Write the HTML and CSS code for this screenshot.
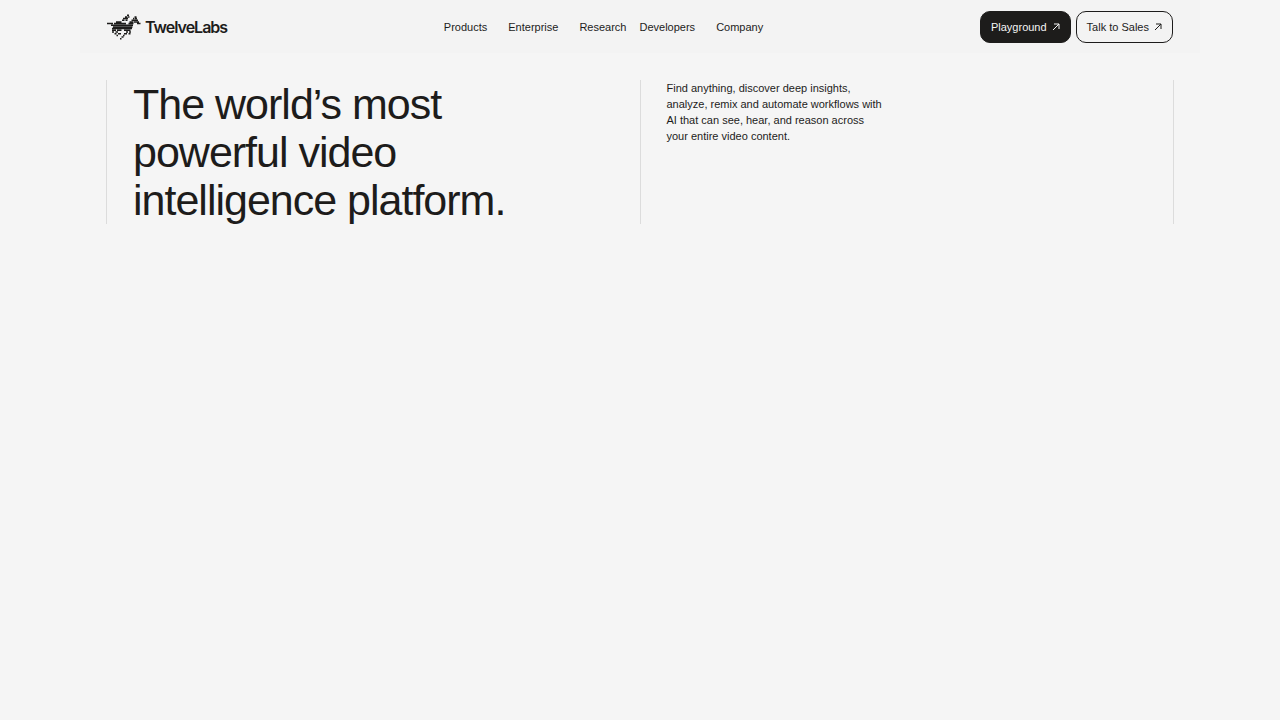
FILE: index.html
```
<!DOCTYPE html>
<html lang="en">
<head>
<meta charset="utf-8">
<meta name="viewport" content="width=device-width, initial-scale=1">
<title>TwelveLabs</title>
<link rel="stylesheet" href="styles.css">
</head>
<body>
<header class="header">
  <a class="logo" href="#" aria-label="TwelveLabs home">
    <svg class="logo-mark" viewBox="0 0 34 26" aria-hidden="true">
      <path stroke="currentColor" stroke-width="1.5" fill="none" d="M20 1.2h2M18 2.9h2.500M21 2.9h1.500M27.500 2.9h2M16 4.600h5M26 4.600h1.500M28 4.600h2M15 6.300h2.500M18.500 6.300h2M24.500 6.300h6.500M9 8h5.500M22.500 8h3.500M26.500 8h5.500M0 9.500h6M7 9.500h12M21.500 9.500h5M30 9.500h3.500M4 11.200h22M6 12.900h19.500M5 14.600h20M5 16.300h4M10 16.300h4.500M17 16.300h6.500M5 18h2M8.500 18h2.500M19 18h2M22 18h2M7.500 19.700h2M11 19.700h3M17 19.700h3M21.500 19.700h2M9.500 21.400h1.500M16 21.400h1.500M14.500 23.100h2M13 24.800h1.500"/>
    </svg>
    <span class="logo-name">TwelveLabs</span>
  </a>
  <nav class="nav" aria-label="Main">
    <button class="nav-item nav-menu" type="button">Products</button>
    <button class="nav-item nav-menu" type="button">Enterprise</button>
    <a class="nav-item nav-link" href="#">Research</a>
    <button class="nav-item nav-menu" type="button">Developers</button>
    <button class="nav-item" type="button">Company</button>
  </nav>
  <div class="actions">
    <a class="button button-dark" href="#">Playground
      <svg class="arrow" viewBox="0 0 8 8" aria-hidden="true"><path d="M1 7 7 1M2 1h5v5"/></svg>
    </a>
    <a class="button" href="#">Talk to Sales
      <svg class="arrow" viewBox="0 0 8 8" aria-hidden="true"><path d="M1 7 7 1M2 1h5v5"/></svg>
    </a>
  </div>
</header>
<main class="hero">
  <div class="column">
    <h1 class="title">The world’s most powerful video intelligence platform.</h1>
  </div>
  <div class="column">
    <p class="intro">Find anything, discover deep insights, analyze, remix and automate workflows with AI that can see, hear, and reason across your entire video content.</p>
  </div>
</main>
</body>
</html>
```
FILE: styles.css
```
* { box-sizing: border-box; }
body {
  margin: 0;
  background: #f5f5f5;
  color: #1d1c1b;
  font: 11px/16px "Liberation Sans", Arial, sans-serif;
}
.header {
  display: flex;
  align-items: center;
  justify-content: space-between;
  max-width: 1120px;
  margin: 0 auto;
  padding: 11px 27px 10px;
  background: #f3f3f3;
}
.logo {
  display: flex;
  align-items: center;
  gap: 4px;
  color: inherit;
  text-decoration: none;
}
.logo-mark { width: 34px; height: 26px; }
.logo-name { font: 600 16px/20px Inter, sans-serif; letter-spacing: -1px; }
.nav { display: flex; }
.nav-item {
  padding: 0;
  border: 0;
  background: none;
  color: inherit;
  font: inherit;
  text-decoration: none;
}
.nav-menu { margin-right: 21px; }
.nav-link { margin-right: 13px; }
.actions { display: flex; justify-content: flex-end; gap: 5px; }
.button {
  display: flex;
  align-items: center;
  gap: 5px;
  height: 32px;
  padding: 0 10px;
  border: 1px solid #1d1c1b;
  border-radius: 10px;
  color: #1d1c1b;
  text-decoration: none;
}
.button-dark { background: #1d1c1b; color: #f4f4f4; }
.arrow { width: 8px; height: 8px; fill: none; stroke: currentColor; }
.hero {
  display: grid;
  grid-template-columns: 1fr 1fr;
  max-width: 1068px;
  margin: 27px auto 0;
  border-right: 1px solid #dcdcdc;
}
.column { padding-left: 26px; border-left: 1px solid #dcdcdc; }
.title {
  max-width: 400px;
  margin: 0;
  font-size: 43px;
  font-weight: 400;
  line-height: 48px;
  letter-spacing: -1px;
}
.intro { max-width: 220px; margin: 0; }
```
